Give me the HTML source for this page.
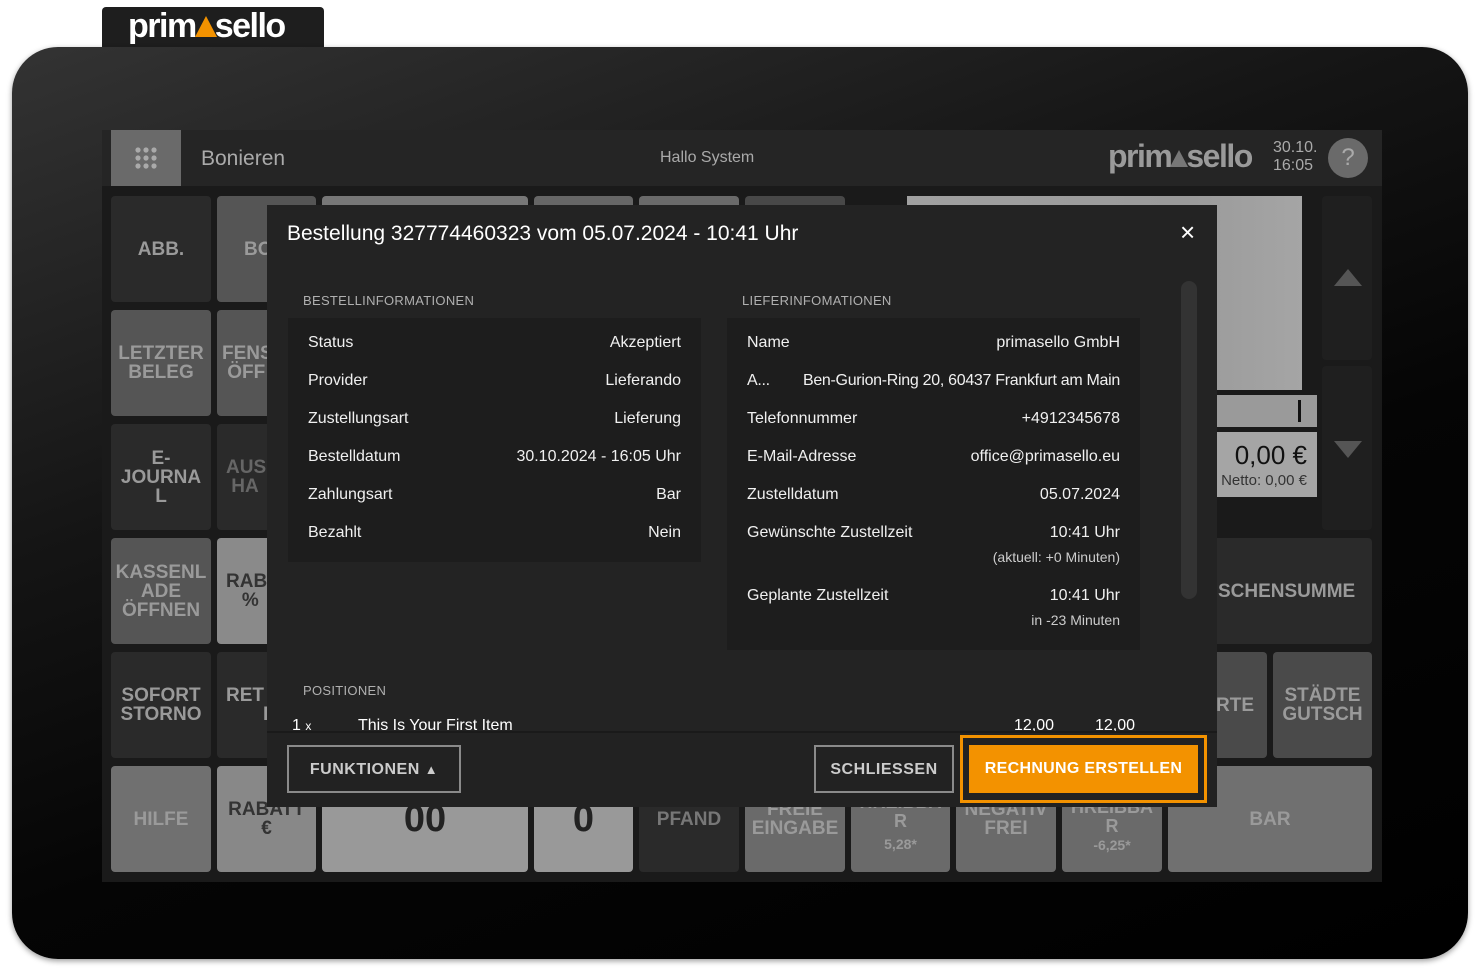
<!DOCTYPE html>
<html><head><meta charset="utf-8"><style>
*{margin:0;padding:0;box-sizing:border-box}
body{width:1480px;height:975px;background:#fff;position:relative;overflow:hidden;font-family:"Liberation Sans",sans-serif}
.a{position:absolute}
.tab{left:102px;top:7px;width:222px;height:42px;background:#1e1e1e;border-radius:4px 4px 0 0}
.logo{font-size:34px;color:#fff;font-weight:bold;letter-spacing:-1.5px;white-space:nowrap}
.tri{display:inline-block;width:0;height:0;border-left:11px solid transparent;border-right:11px solid transparent;border-bottom:21px solid #f39200;margin:0 -2px 0 -1px}
.dev{left:12px;top:47px;width:1456px;height:912px;border-radius:46px;background:linear-gradient(160deg,#333 0%,#151515 35%,#050505 60%,#000 100%);box-shadow:0 2px 6px rgba(0,0,0,.4)}
.scr{left:102px;top:130px;width:1280px;height:752px;background:#1a1a1a}
.hdr{left:102px;top:130px;width:1280px;height:56px;background:#252525}
.b{position:absolute;border-radius:4px;display:flex;flex-direction:column;align-items:center;justify-content:center;text-align:center;font-weight:bold;font-size:19px;line-height:19px;color:#9a9a9a;overflow:hidden;white-space:nowrap}
.d{background:#2a2a2a}.g{background:#555}.l{background:#8a8a8a;color:#333}.m{background:#6a6a6a}
.modal{left:267px;top:205px;width:950px;height:602px;background:#232323;color:#fff}
.box{position:absolute;background:#1d1d1d}
.row{position:absolute;left:20px;right:20px;font-size:16px;display:flex;justify-content:space-between;color:#f0f0f0}
.sec{position:absolute;font-size:13px;color:#b0b0b0;letter-spacing:.3px}
.sub{position:absolute;right:20px;font-size:14px;color:#ccc}
</style></head><body>
<div class="a tab"></div>
<div class="a logo" style="left:128px;top:7px">prim<span class="tri"></span>sello</div>
<div class="a dev"></div>
<div class="a scr"></div>
<div class="a hdr"></div>
<div class="a" style="left:111px;top:130px;width:70px;height:56px;background:#6a6a6a"></div>
<svg class="a" style="left:135px;top:147px" width="22" height="22" viewBox="0 0 22 22" fill="#aaa"><circle cx="3" cy="3" r="2.6"/><circle cx="11" cy="3" r="2.6"/><circle cx="19" cy="3" r="2.6"/><circle cx="3" cy="11" r="2.6"/><circle cx="11" cy="11" r="2.6"/><circle cx="19" cy="11" r="2.6"/><circle cx="3" cy="19" r="2.6"/><circle cx="11" cy="19" r="2.6"/><circle cx="19" cy="19" r="2.6"/></svg>
<div class="a" style="left:201px;top:147px;font-size:21px;color:#aaa">Bonieren</div>
<div class="a" style="left:660px;top:149px;font-size:16px;color:#aaa">Hallo System</div>
<div class="a logo" style="left:1108px;top:138px;font-size:32px;color:#9a9a9a">prim<span class="tri" style="border-bottom-color:#777;border-left-width:9px;border-right-width:9px;border-bottom-width:17px"></span>sello</div>
<div class="a" style="left:1273px;top:139px;font-size:16px;color:#aaa;line-height:18px">30.10.<br>16:05</div>
<div class="a" style="left:1328px;top:138px;width:40px;height:40px;border-radius:50%;background:#6a6a6a;color:#aaa;font-size:24px;text-align:center;line-height:40px">?</div>

<div class="b d" style="left:111px;top:196px;width:100px;height:106px">ABB.</div>
<div class="b g" style="left:217px;top:196px;width:99px;height:106px;align-items:flex-start;padding-left:27px">BO</div>
<div class="b m" style="left:322px;top:196px;width:206px;height:106px;background:#777"></div>
<div class="b m" style="left:534px;top:196px;width:99px;height:106px;background:#666"></div>
<div class="b m" style="left:639px;top:196px;width:100px;height:106px"></div>
<div class="b" style="left:745px;top:196px;width:100px;height:106px;background:#484848"></div>
<div class="a" style="left:907px;top:196px;width:395px;height:194px;background:linear-gradient(90deg,#a0a0a0,#9a9a9a 70%,#a5a5a5)"></div>
<div class="a" style="left:1217px;top:395px;width:100px;height:32px;background:#9a9a9a"></div>
<div class="a" style="left:1298px;top:400px;width:3px;height:22px;background:#111"></div>
<div class="a" style="left:1217px;top:432px;width:100px;height:65px;background:#a5a5a5"></div>
<div class="a" style="left:1217px;top:440px;width:90px;text-align:right;font-size:26px;color:#111">0,00 €</div>
<div class="a" style="left:1210px;top:472px;width:97px;text-align:right;font-size:15px;color:#333;white-space:nowrap;overflow:hidden">Netto: 0,00 €</div>
<div class="a" style="left:1322px;top:196px;width:50px;height:164px;background:#1f1f1f;border-radius:4px"></div>
<div class="a" style="left:1322px;top:366px;width:50px;height:164px;background:#1f1f1f;border-radius:4px"></div>
<div class="a" style="left:1334px;top:269px;border-left:14px solid transparent;border-right:14px solid transparent;border-bottom:17px solid #555"></div>
<div class="a" style="left:1334px;top:441px;border-left:14px solid transparent;border-right:14px solid transparent;border-top:17px solid #555"></div>

<div class="b g" style="left:111px;top:310px;width:100px;height:106px">LETZTER<br>BELEG</div>
<div class="b g" style="left:217px;top:310px;width:99px;height:106px;align-items:flex-start;padding-left:5px;text-align:left">FENS<br>&nbsp;ÖFF</div>
<div class="b d" style="left:111px;top:424px;width:100px;height:106px">E-<br>JOURNA<br>L</div>
<div class="b d" style="left:217px;top:424px;width:99px;height:106px;color:#666;align-items:flex-start;padding-left:9px;text-align:left">AUS<br>&nbsp;HA</div>
<div class="b g" style="left:111px;top:538px;width:100px;height:106px">KASSENL<br>ADE<br>ÖFFNEN</div>
<div class="b l" style="left:217px;top:538px;width:99px;height:106px;align-items:flex-start;padding-left:9px;text-align:left">RAB<br>&nbsp;&nbsp;&nbsp;%</div>
<div class="b d" style="left:1168px;top:538px;width:204px;height:106px;align-items:flex-start;padding-left:50px">SCHENSUMME</div>
<div class="b d" style="left:111px;top:652px;width:100px;height:106px">SOFORT<br>STORNO</div>
<div class="b d" style="left:217px;top:652px;width:99px;height:106px;align-items:flex-start;padding-left:9px;text-align:left">RET<br>&nbsp;&nbsp;&nbsp;&nbsp;&nbsp;&nbsp;&nbsp;E</div>
<div class="b g" style="left:1168px;top:652px;width:99px;height:106px;align-items:flex-start;padding-left:48px;background:#4a4a4a">RTE</div>
<div class="b g" style="left:1273px;top:652px;width:99px;height:106px;background:#4a4a4a">STÄDTE<br>GUTSCH</div>

<div class="b" style="left:111px;top:766px;width:100px;height:106px;background:#707070">HILFE</div>
<div class="b l" style="left:217px;top:766px;width:99px;height:106px;background:#888">RABATT<br>€</div>
<div class="b l" style="left:322px;top:766px;width:206px;height:106px;background:#999;font-size:38px;line-height:38px;color:#222">00</div>
<div class="b l" style="left:534px;top:766px;width:99px;height:106px;background:#999;font-size:38px;line-height:38px;color:#222">0</div>
<div class="b d" style="left:639px;top:766px;width:100px;height:106px;color:#777">PFAND</div>
<div class="b m" style="left:745px;top:766px;width:100px;height:106px">FREIE<br>EINGABE</div>
<div class="b m" style="left:851px;top:766px;width:99px;height:106px;font-size:18px;padding-top:8px"><div>HREIBBA</div><div>R</div><div style="font-size:14px;margin-top:4px">5,28*</div></div>
<div class="b m" style="left:956px;top:766px;width:100px;height:106px">NEGATIV<br>FREI</div>
<div class="b m" style="left:1062px;top:766px;width:100px;height:106px;font-size:18px;padding-top:14px"><div>HREIBBA</div><div>R</div><div style="font-size:14px;margin-top:0">-6,25*</div></div>
<div class="b m" style="left:1168px;top:766px;width:204px;height:106px;background:#707070">BAR</div>

<div class="a modal">
 <div class="a" style="left:20px;top:17px;font-size:21px">Bestellung 327774460323 vom 05.07.2024 - 10:41 Uhr</div>
 <div class="a" style="left:913px;top:12px;font-size:26px">×</div>
 <div class="a" style="left:914px;top:76px;width:16px;height:318px;border-radius:8px;background:#333"></div>
 <div class="sec" style="left:36px;top:88px">BESTELLINFORMATIONEN</div>
 <div class="sec" style="left:475px;top:88px">LIEFERINFOMATIONEN</div>
 <div class="box" style="left:21px;top:113px;width:413px;height:244px">
  <div class="row" style="top:16px"><span>Status</span><span>Akzeptiert</span></div>
  <div class="row" style="top:54px"><span>Provider</span><span>Lieferando</span></div>
  <div class="row" style="top:92px"><span>Zustellungsart</span><span>Lieferung</span></div>
  <div class="row" style="top:130px"><span>Bestelldatum</span><span>30.10.2024 - 16:05 Uhr</span></div>
  <div class="row" style="top:168px"><span>Zahlungsart</span><span>Bar</span></div>
  <div class="row" style="top:206px"><span>Bezahlt</span><span>Nein</span></div>
 </div>
 <div class="box" style="left:460px;top:113px;width:413px;height:332px">
  <div class="row" style="top:16px"><span>Name</span><span>primasello GmbH</span></div>
  <div class="row" style="top:54px;letter-spacing:-.3px"><span>A...</span><span>Ben-Gurion-Ring 20, 60437 Frankfurt am Main</span></div>
  <div class="row" style="top:92px"><span>Telefonnummer</span><span>+4912345678</span></div>
  <div class="row" style="top:130px"><span>E-Mail-Adresse</span><span>office@primasello.eu</span></div>
  <div class="row" style="top:168px"><span>Zustelldatum</span><span>05.07.2024</span></div>
  <div class="row" style="top:206px"><span>Gewünschte Zustellzeit</span><span>10:41 Uhr</span></div>
  <div class="sub" style="top:231px">(aktuell: +0 Minuten)</div>
  <div class="row" style="top:269px"><span>Geplante Zustellzeit</span><span>10:41 Uhr</span></div>
  <div class="sub" style="top:294px">in -23 Minuten</div>
 </div>
 <div class="sec" style="left:36px;top:478px">POSITIONEN</div>
 <div class="a" style="left:25px;top:512px;font-size:16px">1 <span style="font-size:12px">x</span></div>
 <div class="a" style="left:91px;top:512px;font-size:16px">This Is Your First Item</div>
 <div class="a" style="left:747px;top:512px;font-size:16px">12,00</div>
 <div class="a" style="left:828px;top:512px;font-size:16px">12,00</div>
 <div class="a" style="left:0;top:526px;width:950px;height:76px;background:#222;border-top:2px solid #1a1a1a"></div>
 <div class="a" style="left:20px;top:540px;width:174px;height:48px;border:2px solid #8a8a8a;color:#ccc;font-size:16px;font-weight:bold;letter-spacing:.5px;text-align:center;line-height:46px">FUNKTIONEN <span style="font-size:13px">▲</span></div>
 <div class="a" style="left:547px;top:540px;width:140px;height:48px;border:2px solid #8a8a8a;color:#ccc;font-size:16px;font-weight:bold;letter-spacing:.5px;text-align:center;line-height:46px">SCHLIESSEN</div>
 <div class="a" style="left:693px;top:530px;width:247px;height:68px;border:3px solid #f39200"></div>
 <div class="a" style="left:702px;top:540px;width:229px;height:48px;background:#f39200;color:#fff;font-size:16px;font-weight:bold;letter-spacing:.3px;text-align:center;line-height:48px">RECHNUNG ERSTELLEN</div>
</div>
</body></html>
